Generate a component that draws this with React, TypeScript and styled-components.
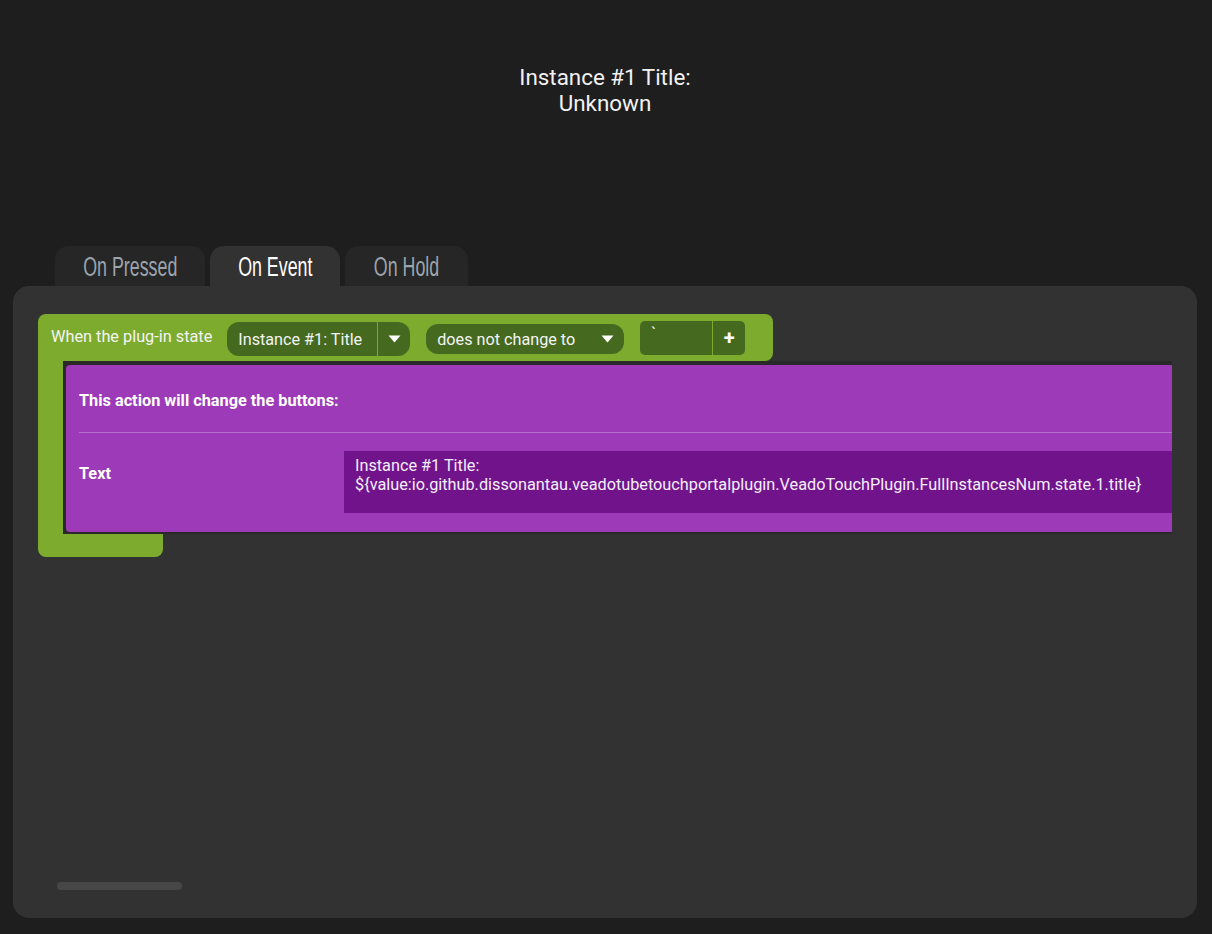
import React from 'react'
import styled, { createGlobalStyle } from 'styled-components'

//-----------------------------------------------------------------------------
// Global
//-----------------------------------------------------------------------------
const GlobalStyle = createGlobalStyle`
  html, body {
    margin: 0;
    padding: 0;
    background: #1e1e1e;
  }
  body {
    font-family: Roboto, "Liberation Sans", sans-serif;
    color: #f0f0f0;
  }
`

//-----------------------------------------------------------------------------
// Component
//-----------------------------------------------------------------------------
const tabs = [
  { label: 'On Pressed', width: 150 },
  { label: 'On Event', width: 130 },
  { label: 'On Hold', width: 123 }
]

const Caret = () => (
  <svg width="13" height="8" viewBox="0 0 13 8">
    <path d="M0.5 0.5 H12.5 L6.5 7.5 Z" fill="#ffffff" />
  </svg>
)

export const App = () => {
  return (
    <Page>
      <GlobalStyle />
      <Title>
        Instance #1 Title:
        <br />
        Unknown
      </Title>

      <TabBar>
        {tabs.map(tab => (
          <Tab key={tab.label} width={tab.width} active={tab.label === 'On Event'}>
            <TabText>{tab.label}</TabText>
          </Tab>
        ))}
      </TabBar>

      <Panel>
        <Workspace>
          <Block>
            <BlockHeader>
              <HeaderLabel>When the plug-in state</HeaderLabel>
              <SplitSelect>
                <SelectText>Instance #1: Title</SelectText>
                <SelectArrow>
                  <Caret />
                </SelectArrow>
              </SplitSelect>
              <Select>
                <SelectText>does not change to</SelectText>
                <Caret />
              </Select>
              <ValueInput>
                <ValueText>`</ValueText>
                <AddButton>+</AddButton>
              </ValueInput>
            </BlockHeader>

            <BlockBody>
              <BlockArm />
              <Slot>
                <Action>
                  <ActionHeading>This action will change the buttons:</ActionHeading>
                  <Divider />
                  <ActionRow>
                    <ActionLabel>Text</ActionLabel>
                    <ActionValue>
                      Instance #1 Title:
                      <br />
                      {'${value:io.github.dissonantau.veadotubetouchportalplugin.VeadoTouchPlugin.FullInstancesNum.state.1.title}'}
                    </ActionValue>
                  </ActionRow>
                </Action>
              </Slot>
            </BlockBody>

            <BlockFoot />
          </Block>
        </Workspace>

        <ScrollThumb />
      </Panel>
    </Page>
  )
}

//-----------------------------------------------------------------------------
// Styled Components
//-----------------------------------------------------------------------------
const Page = styled.div`
  width: 1212px;
  height: 934px;
  display: flex;
  flex-direction: column;
  box-sizing: border-box;
  padding: 64px 15px 16px 13px;
  background: #1e1e1e;
`

const Title = styled.div`
  text-align: center;
  font-size: 22.4px;
  line-height: 26px;
  color: #f2f2f2;
`

const TabBar = styled.div`
  display: flex;
  gap: 5px;
  margin-top: 130px;
  padding-left: 42px;
`

const Tab = styled.div<{ active?: boolean; width: number }>`
  width: ${p => p.width}px;
  height: 40px;
  display: flex;
  align-items: center;
  justify-content: center;
  border-radius: 14px 14px 0 0;
  background: ${p => (p.active ? '#323232' : '#262626')};
  color: ${p => (p.active ? '#ffffff' : '#9ba4ad')};
`

const TabText = styled.span`
  display: inline-block;
  font-family: "Liberation Sans", Arial, sans-serif;
  font-size: 27px;
  line-height: 30px;
  margin-top: 1px;
  white-space: nowrap;
  transform: scaleX(0.66);
`

const Panel = styled.div`
  flex: 1;
  display: flex;
  flex-direction: column;
  justify-content: space-between;
  background: #323232;
  border-radius: 16px;
  padding: 28px 25px 28px 25px;
`

const Workspace = styled.div`
  overflow: hidden;
`

const Block = styled.div`
  display: flex;
  flex-direction: column;
  align-items: flex-start;
  width: 1300px;
`

const BlockHeader = styled.div`
  display: flex;
  align-items: flex-start;
  height: 47px;
  box-sizing: border-box;
  padding: 7px 28px 0 13px;
  background: #7dab2e;
  border-radius: 8px;
  border-bottom-left-radius: 0;
`

const HeaderLabel = styled.div`
  font-size: 16.3px;
  line-height: 19px;
  padding-top: 6px;
  margin-right: 15px;
  color: #f4f4f4;
`

const SplitSelect = styled.div`
  display: flex;
  align-items: stretch;
  height: 34px;
  border-radius: 12px;
  background: #456a1f;
  margin-top: 1px;
  margin-right: 16px;
`

const SelectText = styled.div`
  font-size: 16.2px;
  display: flex;
  align-items: center;
  padding: 0 15px 0 11px;
  color: #f4f4f4;
`

const SelectArrow = styled.div`
  width: 32px;
  display: flex;
  align-items: center;
  justify-content: center;
  border-left: 1px solid #7dab2e;
`

const Select = styled.div`
  display: flex;
  align-items: center;
  height: 30px;
  width: 198px;
  box-sizing: border-box;
  padding-right: 10px;
  justify-content: space-between;
  border-radius: 12px;
  background: #456a1f;
  margin-top: 3px;
  margin-right: 16px;
`

const ValueInput = styled.div`
  display: flex;
  align-items: stretch;
  height: 34px;
  width: 105px;
  border-radius: 5px;
  background: #456a1f;
`

const ValueText = styled.div`
  flex: 1;
  font-size: 16px;
  padding: 3px 0 0 11px;
  color: #f4f4f4;
`

const AddButton = styled.div`
  width: 32px;
  display: flex;
  align-items: center;
  justify-content: center;
  border-left: 1px solid #7dab2e;
  font-size: 20px;
  font-weight: bold;
  color: #ffffff;
`

const BlockBody = styled.div`
  display: flex;
`

const BlockArm = styled.div`
  width: 25px;
  background: #7dab2e;
`

const Slot = styled.div`
  background: #292929;
  padding: 4px 0 2px 3px;
`

const Action = styled.div`
  width: 1200px;
  background: #9c3ab8;
  border-radius: 4px 0 0 4px;
  padding-left: 13px;
`

const ActionHeading = styled.div`
  height: 67px;
  display: flex;
  align-items: center;
  padding-top: 3px;
  box-sizing: border-box;
  font-size: 16.3px;
  font-weight: bold;
  color: #ffffff;
`

const Divider = styled.div`
  height: 1px;
  background: #b66fcd;
`

const ActionRow = styled.div`
  display: flex;
  padding: 18px 0 19px;
`

const ActionLabel = styled.div`
  width: 265px;
  flex-shrink: 0;
  font-size: 16.3px;
  font-weight: bold;
  padding-top: 13px;
  color: #ffffff;
`

const ActionValue = styled.div`
  flex: 1;
  min-height: 62px;
  box-sizing: border-box;
  padding: 5px 11px 19px;
  background: #71148c;
  font-size: 16.25px;
  line-height: 19px;
  color: #f4eefa;
`

const BlockFoot = styled.div`
  width: 125px;
  height: 23px;
  background: #7dab2e;
  border-radius: 0 0 8px 8px;
`

const ScrollThumb = styled.div`
  width: 125px;
  height: 8px;
  margin-left: 19px;
  border-radius: 4px;
  background: #474747;
`

export default App
